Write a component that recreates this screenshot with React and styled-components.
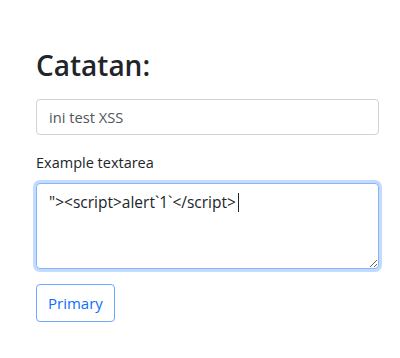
import styled, { createGlobalStyle } from 'styled-components';

const GlobalStyle = createGlobalStyle`
  body {
    margin: 0;
    background: #ffffff;
    font-family: 'Open Sans', 'Noto Sans', sans-serif;
    color: #212529;
  }
`;

const NOTE = '"><script>alert`1`</script>';

function App() {
  return (
    <>
      <GlobalStyle />
      <Styled.Page>
        <Styled.Title>Catatan:</Styled.Title>
        <Styled.Input defaultValue="ini test XSS" readOnly />
        <Styled.Label htmlFor="note">Example textarea</Styled.Label>
        <Styled.Field>
          <Styled.TextArea id="note" rows={3} defaultValue={NOTE} />
          <Styled.CaretLayer aria-hidden="true">
            <Styled.Ghost>{NOTE}</Styled.Ghost>
            <Styled.Caret />
          </Styled.CaretLayer>
        </Styled.Field>
        <Styled.Button type="button">Primary</Styled.Button>
      </Styled.Page>
    </>
  );
}

export default App;

const Styled = {
  Page: styled.div`
    width: 343px;
    padding: 48px 0 0 36px;
    display: flex;
    flex-direction: column;
    align-items: flex-start;
  `,

  Title: styled.h1`
    margin: 0 0 17px;
    font-size: 28px;
    font-weight: 600;
    line-height: 34px;
    color: #212529;
  `,

  Input: styled.input`
    box-sizing: border-box;
    width: 100%;
    height: 36px;
    padding: 6px 12px;
    border: 1px solid #ced4da;
    border-radius: 4px;
    font-family: inherit;
    font-size: 14.7px;
    line-height: 24px;
    color: #50575e;
    outline: none;
  `,

  Label: styled.label`
    margin: 16px 0 8px;
    font-size: 14.5px;
    line-height: 24px;
    color: #212529;
  `,

  Field: styled.div`
    position: relative;
    width: 100%;
    display: flex;
  `,

  TextArea: styled.textarea`
    box-sizing: border-box;
    width: 100%;
    height: 86px;
    padding: 6px 12px;
    border: 1px solid #86b7fe;
    border-radius: 4px;
    box-shadow: 0 0 0 3px rgba(13, 110, 253, 0.25);
    font-family: inherit;
    font-size: 15.5px;
    line-height: 24px;
    color: #212529;
    outline: none;
    resize: vertical;
  `,

  CaretLayer: styled.div`
    position: absolute;
    top: 7px;
    left: 13px;
    font-size: 15.5px;
    line-height: 24px;
    white-space: pre;
    pointer-events: none;
  `,

  Ghost: styled.span`
    color: transparent;
  `,

  Caret: styled.span`
    display: inline-block;
    width: 1px;
    height: 19px;
    margin-left: 2px;
    vertical-align: -4px;
    background: #212529;
  `,

  Button: styled.button`
    margin-top: 15px;
    padding: 6px 11px;
    border: 1px solid #6ea8fe;
    border-radius: 4px;
    background: #ffffff;
    font-family: inherit;
    font-size: 15px;
    line-height: 24px;
    color: #0d6efd;
    cursor: pointer;
  `,
};
